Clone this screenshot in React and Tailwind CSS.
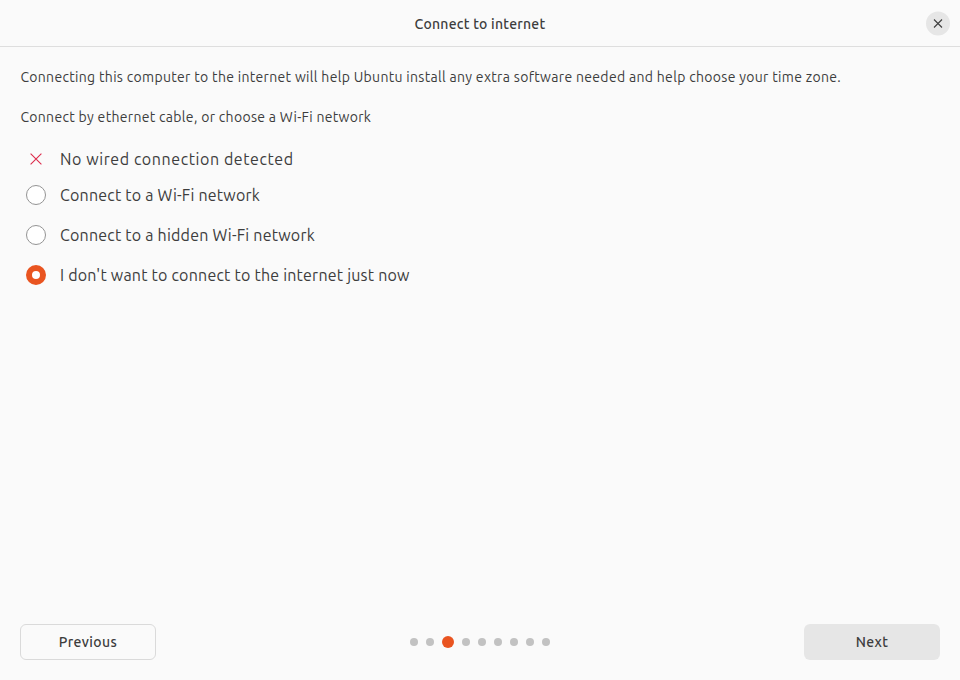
import { useState } from "react";

const options = [
  "Connect to a Wi-Fi network",
  "Connect to a hidden Wi-Fi network",
  "I don't want to connect to the internet just now",
];

const steps = [0, 1, 2, 3, 4, 5, 6, 7, 8];

function Cross({ className }) {
  return (
    <svg viewBox="0 0 12 12" className={className} fill="none" stroke="currentColor" aria-hidden="true">
      <path d="M.6.6 11.4 11.4M11.4.6.6 11.4" />
    </svg>
  );
}

function Radio({ label, selected, onSelect }) {
  return (
    <button
      type="button"
      role="radio"
      aria-checked={selected}
      onClick={onSelect}
      className="flex h-10 items-center pl-1.5 text-left"
    >
      <span
        className={
          selected
            ? "size-5 shrink-0 rounded-full border-[6px] border-[#e95420] bg-white"
            : "size-5 shrink-0 rounded-full border border-[#949494] bg-white"
        }
      />
      <span className="ml-3.5 text-base leading-6 tracking-[0.213px]">{label}</span>
    </button>
  );
}

export default function App() {
  const [selected, setSelected] = useState(2);

  return (
    <div className="flex h-[680px] w-[960px] flex-col bg-[#fafafa] font-['Ubuntu','Noto_Sans',sans-serif] text-[#3d3d3d]">
      <header className="grid h-[47px] shrink-0 grid-cols-[1fr_auto_1fr] items-start border-b border-[#dedede] pr-2.5">
        <h1 className="col-start-2 mt-3.5 pl-2.5 text-sm leading-5 font-medium tracking-[0.25px]">Connect to internet</h1>
        <button type="button" aria-label="Close" className="mt-[11px] justify-self-end">
          <svg viewBox="0 0 24 25" className="block h-[25px] w-6" fill="none" aria-hidden="true">
            <circle cx="12" cy="12.5" r="12" fill="#e6e6e6" />
            <path d="m8 8.5 8 8m0-8-8 8" stroke="#3d3d3d" strokeWidth="1.1" />
          </svg>
        </button>
      </header>

      <main className="flex flex-1 flex-col px-5 pt-5">
        <p className="pl-[0.4px] text-sm leading-5 tracking-[0.316px]">
          Connecting this computer to the internet will help Ubuntu install any extra software needed and help choose your time zone.
        </p>
        <p className="mt-5 pl-[0.4px] text-sm leading-5 tracking-[0.31px]">
          Connect by ethernet cable, or choose a Wi-Fi network
        </p>
        <div className="mt-5 flex h-6 items-center pl-2.5">
          <Cross className="size-3 shrink-0 stroke-[1.1] text-[#dc2c4c]" />
          <span className="ml-[18px] text-base leading-6 tracking-[0.58px]">No wired connection detected</span>
        </div>
        <div role="radiogroup" className="mt-1 flex flex-col">
          {options.map((label, i) => (
            <Radio key={label} label={label} selected={selected === i} onSelect={() => setSelected(i)} />
          ))}
        </div>
      </main>

      <footer className="flex shrink-0 items-center justify-between p-5">
        <button type="button" className="h-9 w-[136px] rounded-md border border-[#dadada] text-sm font-medium tracking-[0.4px]">
          Previous
        </button>
        <div className="flex items-center gap-2">
          {steps.map((step) => (
            <span key={step} className={step === 2 ? "size-3 rounded-full bg-[#e95420]" : "size-2 rounded-full bg-[#c2c2c2]"} />
          ))}
        </div>
        <button type="button" className="h-9 w-[136px] rounded-md bg-[#e6e6e6] text-sm font-medium tracking-[0.4px]">
          Next
        </button>
      </footer>
    </div>
  );
}
